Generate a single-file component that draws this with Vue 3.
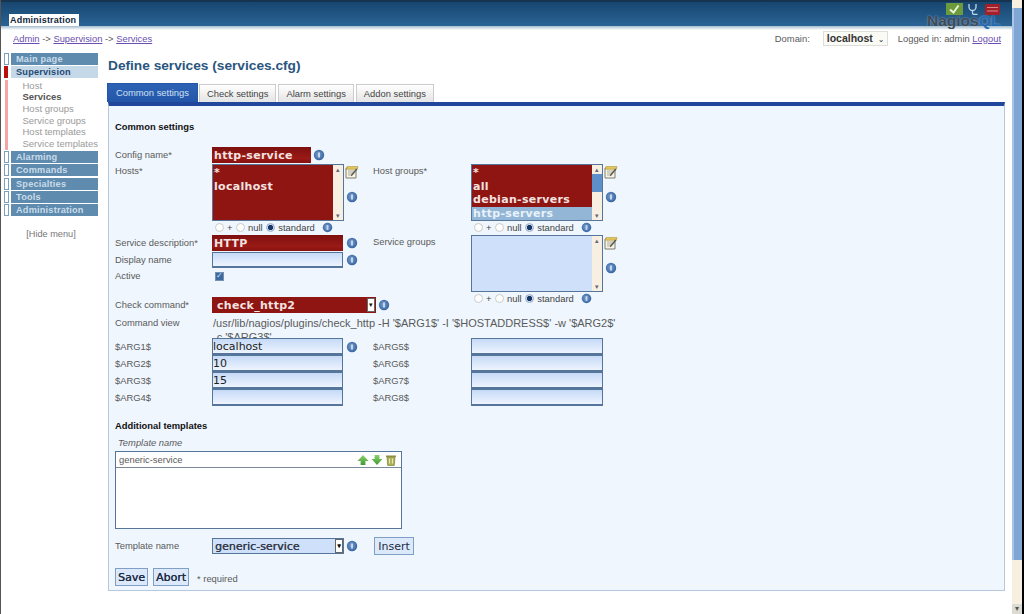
<template>
  <div class="page">
    <svg class="defs" width="0" height="0">
      <defs>
        <radialGradient id="helpFill" cx="45%" cy="45%" r="60%">
          <stop offset="0" stop-color="#7fa2cf" />
          <stop offset="1" stop-color="#2f5f9e" />
        </radialGradient>
        <linearGradient id="arrowFill" x1="0" y1="0" x2="0" y2="1">
          <stop offset="0" stop-color="#8fd06a" />
          <stop offset="1" stop-color="#3f9a35" />
        </linearGradient>
        <symbol id="help" viewBox="0 0 12 12">
          <circle cx="6" cy="6" r="5.2" fill="url(#helpFill)" />
          <path d="M5 3.400h2v5.200H5z" fill="#c5d6ec" />
        </symbol>
        <symbol id="note" viewBox="0 0 14 14">
          <path d="M1 3h10v10H1z" fill="#f8f4e4" stroke="#7d7d6c" />
          <path d="M3 6h6M3 8h6M3 10h4" stroke="#9a9a8a" stroke-width=".8" />
          <path d="M2 1.600h11l-.6 2.600H1.400z" fill="#e5c95e" stroke="#a98f35" stroke-width=".6" />
          <path d="M12.400 4.400 7.400 10.600l-1.500.6.3-1.600 5-6.200z" fill="#5b5b50" />
        </symbol>
      </defs>
    </svg>

    <div class="app">
      <header class="topbar">
        <div class="main-tab">Administration</div>
        <div class="logo">
          <div class="logo-icons">
            <svg width="17" height="12" viewBox="0 0 17 12">
              <rect width="17" height="12" fill="#6d9a3a" />
              <path d="M4 6.500 7.500 9.500l5-7" fill="none" stroke="#e8f3d8" stroke-width="2" />
            </svg>
            <svg width="13" height="12" viewBox="0 0 13 12">
              <path d="M3 1v3a3.500 3.500 0 0 0 7 0V1M6.500 7.500V10q0 1.500 2 1.500h3" fill="none" stroke="#bcd7ee" stroke-width="1.300" />
            </svg>
            <svg width="15" height="12" viewBox="0 0 15 12">
              <rect y="1" width="15" height="11" rx="1" fill="#a3202a" />
              <path d="M2 4.500h11M2 8h11" stroke="#d98a8a" stroke-width="1.200" />
            </svg>
          </div>
          <div class="logo-text">Nagios<span>QL</span></div>
        </div>
      </header>
      <div class="top-fade"></div>

      <div class="crumbs">
        <div class="path">
          <a>Admin</a> -&gt; <a>Supervision</a> -&gt; <a>Services</a>
        </div>
        <div class="session">
          <span>Domain:</span>
          <div class="domain">localhost <i>⌄</i></div>
          <span>Logged in: admin <a>Logout</a></span>
        </div>
      </div>

      <div class="layout">
        <aside class="side">
          <template v-for="m in menu" :key="m.name">
            <div class="menu-item" :class="{ open: m.items }">
              <span class="marker"></span>
              <span class="menu-label">{{ m.name }}</span>
            </div>
            <ul v-if="m.items" class="submenu">
              <li v-for="s in m.items" :key="s" :class="{ cur: s === 'Services' }">{{ s }}</li>
            </ul>
          </template>
          <div class="hide-menu">[Hide menu]</div>
        </aside>

        <main class="content">
          <h1>Define services (services.cfg)</h1>
          <nav class="tabs">
            <div v-for="(t, i) in tabs" :key="t" class="tab" :class="{ active: i === 0 }">{{ t }}</div>
          </nav>

          <section class="panel">
            <h2>Common settings</h2>

            <div class="columns">
              <div class="col-left">
                <div class="row r16">
                  <label>Config name*</label>
                  <input class="field red short" value="http-service" />
                  <svg class="help"><use href="#help" /></svg>
                </div>
                <div class="row list-row">
                  <label>Hosts*</label>
                  <div class="listbox red">
                    <div class="opts"><div>*</div><div>localhost</div></div>
                    <div class="scroll"><b>▴</b><b>▾</b></div>
                  </div>
                  <div class="list-icons">
                    <svg class="note"><use href="#note" /></svg>
                    <svg class="help"><use href="#help" /></svg>
                  </div>
                </div>
                <div class="row radios-row">
                  <label></label>
                  <div class="radios">
                    <input type="radio" />+ <input type="radio" />null <input type="radio" checked />standard
                    <svg class="help"><use href="#help" /></svg>
                  </div>
                </div>
                <div class="row r17">
                  <label>Service description*</label>
                  <input class="field red wide" value="HTTP" />
                  <svg class="help"><use href="#help" /></svg>
                </div>
                <div class="row r17">
                  <label>Display name</label>
                  <input class="field wide" />
                  <svg class="help"><use href="#help" /></svg>
                </div>
                <div class="row active-row">
                  <label>Active</label>
                  <input class="check" type="checkbox" checked />
                </div>
              </div>

              <div class="col-right">
                <div class="row list-row">
                  <label>Host groups*</label>
                  <div class="listbox red">
                    <div class="opts">
                      <div>*</div><div>all</div><div>debian-servers</div>
                      <div class="selected">http-servers</div>
                    </div>
                    <div class="scroll"><b>▴</b><em></em><b>▾</b></div>
                  </div>
                  <div class="list-icons">
                    <svg class="note"><use href="#note" /></svg>
                    <svg class="help"><use href="#help" /></svg>
                  </div>
                </div>
                <div class="row radios-row">
                  <label></label>
                  <div class="radios">
                    <input type="radio" />+ <input type="radio" />null <input type="radio" checked />standard
                    <svg class="help"><use href="#help" /></svg>
                  </div>
                </div>
                <div class="row list-row">
                  <label>Service groups</label>
                  <div class="listbox">
                    <div class="opts"></div>
                    <div class="scroll"><b>▴</b><b>▾</b></div>
                  </div>
                  <div class="list-icons">
                    <svg class="note"><use href="#note" /></svg>
                    <svg class="help"><use href="#help" /></svg>
                  </div>
                </div>
                <div class="row radios-row">
                  <label></label>
                  <div class="radios">
                    <input type="radio" />+ <input type="radio" />null <input type="radio" checked />standard
                    <svg class="help"><use href="#help" /></svg>
                  </div>
                </div>
              </div>
            </div>

            <div class="row command-row">
              <label>Check command*</label>
              <div class="select red cmd"><span>check_http2</span><i class="drop">▾</i></div>
              <svg class="help"><use href="#help" /></svg>
            </div>
            <div class="row view-row">
              <label>Command view</label>
              <div class="cmd-view">/usr/lib/nagios/plugins/check_http -H '$ARG1$' -I '$HOSTADDRESS$' -w '$ARG2$' -c '$ARG3$'</div>
            </div>

            <div class="args">
              <div v-for="a in args" :key="a.name" class="arg-row">
                <div class="row arg-left">
                  <label>{{ a.name }}</label>
                  <input class="field wide" :value="a.value" />
                  <svg v-if="a.help" class="help"><use href="#help" /></svg>
                </div>
                <div class="row arg-right">
                  <label>{{ a.other }}</label>
                  <input class="field wide" />
                </div>
              </div>
            </div>

            <h2 class="add-title">Additional templates</h2>
            <div class="tpl-head">Template name</div>
            <div class="tpl-box">
              <div class="tpl-line">
                <span>generic-service</span>
                <div class="tpl-icons">
                  <svg width="12" height="12" viewBox="0 0 12 12"><path d="M6 1 11.500 7H8.400v4H3.600V7H.5z" fill="url(#arrowFill)" /></svg>
                  <svg width="12" height="12" viewBox="0 0 12 12"><path d="M3.600 1h4.800v4h3.100L6 11 .5 5h3.100z" fill="url(#arrowFill)" /></svg>
                  <svg width="12" height="12" viewBox="0 0 12 12">
                    <path d="M2 3h8l-.7 8.400H2.700z" fill="#b0b35a" stroke="#7c7f3a" stroke-width=".7" />
                    <path d="M1 1.500h10V3H1z" fill="#8c8f45" />
                    <path d="M4.500 4.500v5M7.500 4.500v5" stroke="#e6e6b4" />
                  </svg>
                </div>
              </div>
            </div>

            <div class="row insert-row">
              <label>Template name</label>
              <div class="select tpl-select"><span>generic-service</span><i class="drop">▾</i></div>
              <svg class="help"><use href="#help" /></svg>
              <button class="btn insert">Insert</button>
            </div>

            <div class="actions">
              <button class="btn">Save</button>
              <button class="btn">Abort</button>
              <span>* required</span>
            </div>
          </section>
        </main>
      </div>
    </div>

    <div class="page-scroll">
      <span class="sb-btn"></span>
      <span class="sb-thumb"></span>
      <span class="sb-track"></span>
      <span class="sb-btn low">▾</span>
    </div>
  </div>
</template>

<script setup>
const menu = [
  { name: 'Main page' },
  { name: 'Supervision', items: ['Host', 'Services', 'Host groups', 'Service groups', 'Host templates', 'Service templates'] },
  { name: 'Alarming' },
  { name: 'Commands' },
  { name: 'Specialties' },
  { name: 'Tools' },
  { name: 'Administration' },
]

const tabs = ['Common settings', 'Check settings', 'Alarm settings', 'Addon settings']

const args = [
  { name: '$ARG1$', other: '$ARG5$', value: 'localhost', help: true },
  { name: '$ARG2$', other: '$ARG6$', value: '10' },
  { name: '$ARG3$', other: '$ARG7$', value: '15' },
  { name: '$ARG4$', other: '$ARG8$', value: '' },
]
</script>

<style>
html, body { margin: 0; background: #fff; overflow: hidden; }
</style>

<style scoped>
.page {
  width: 1024px; height: 614px; box-sizing: border-box;
  border-left: 1px solid #555;
  border-right: 2px solid #000;
  display: flex;
  font: 9.400px "Liberation Sans", Arial, sans-serif;
  color: #5a5a5a;
  overflow: hidden;
}
.defs { position: absolute; }
.app { width: 1011px; flex: none; }

/* browser scrollbar */
.page-scroll { flex: 1; display: flex; flex-direction: column; background: #f7efe0; }
.sb-btn { height: 8px; flex: none; background: #f7efe0; }
.sb-btn.low { height: 10px; background: #dcdcd4; font: 8px/9px "DejaVu Sans", sans-serif; color: #555; text-align: center; }
.sb-thumb { height: 552px; flex: none; background: #7fa6d4; border-left: 2px solid #a9c6e4; box-sizing: border-box; }
.sb-track { flex: 1; }

/* header */
.topbar {
  height: 26px;
  background: linear-gradient(#17466f, #2a6496);
  border-top: 2px solid #16344f;
  box-sizing: border-box;
  display: flex; align-items: flex-end; justify-content: space-between;
  padding-left: 8px;
}
.main-tab {
  height: 12px; line-height: 12px; padding: 0 3px 0 1px;
  background: #fff; color: #12283c;
  font-size: 9px; font-weight: bold; letter-spacing: .2px;
}
.logo { width: 86px; align-self: flex-start; position: relative; }
.logo-icons { display: flex; padding: 1px 0 0 20px; height: 12px; }
.logo-icons svg:nth-child(2) { margin: 0 6px 0 3px; }
.logo-text {
  margin: -2px 0 0 1px;
  font: bold 15.500px/15px "Liberation Sans", sans-serif; color: #3f4a54;
  text-shadow: 0 0 2px rgba(190, 210, 225, .7);
  white-space: nowrap;
}
.logo-text span { color: #2468b0; }
.top-fade { height: 4px; background: linear-gradient(#a4bccc, #fff); }

.crumbs {
  height: 18px; display: flex; justify-content: space-between; align-items: center;
  padding: 0 11px 0 12px; margin-top: -1px;
}
.crumbs a { color: #6a4fb0; text-decoration: underline; }
.session { display: flex; align-items: center; gap: 10px; }
.session span:first-child { margin-right: 3px; }
.domain {
  width: 65px; height: 15px; box-sizing: border-box; padding-left: 3px;
  border: 1px solid #ddd; background: #fbfbf6; color: #333;
  font: bold 10.500px/13px "Liberation Sans", sans-serif;
  white-space: nowrap;
}
.domain i { font: normal 8px "DejaVu Sans", sans-serif; margin-left: 2px; }

.layout { display: flex; }

/* left menu */
.side { width: 94px; margin-left: 3px; margin-right: 10px; padding-top: 6px; flex: none; }
.menu-item {
  height: 12px; margin-bottom: 1.400px; display: flex; gap: 2px;
  color: #c9dcea; font-size: 9.200px; font-weight: bold; line-height: 12px; letter-spacing: .2px;
}
.marker { width: 5px; height: 12px; background: #fff; border: 1px solid #7d9fbc; box-sizing: border-box; flex: none; }
.menu-label { flex: 1; background: #5f8bae; padding-left: 5px; }
.menu-item.open { color: #1f4a75; }
.menu-item.open .menu-label { background: #c5d8e8; }
.menu-item.open .marker { background: #b90f0f; border-color: #b90f0f; width: 4px; margin-right: 1px; }
.submenu {
  list-style: none; margin: 0 0 1px 1px; padding: 0 0 0 14.500px; height: 70px;
  border-left: 3px solid #f2a6a6;
  line-height: 11.600px; color: #9a9a9a; font-size: 9.500px; white-space: nowrap;
}
.submenu li.cur { color: #555; font-weight: bold; }
.hide-menu { margin-top: 13px; text-align: center; color: #777; font-size: 9.200px; }

/* content */
.content { width: 897px; flex: none; }
h1 { margin: 10px 0 0; height: 26px; font-size: 13.700px; line-height: 18px; color: #2a5580; }
.tabs { display: flex; gap: 2px; height: 19px; align-items: flex-end; }
.tab {
  height: 18px; line-height: 18px; padding: 0 7px;
  background: linear-gradient(#fff, #e4e4e4); border: 1px solid #ccc; border-bottom: 0;
  box-sizing: border-box; color: #444; font-size: 9.400px;
}
.tab.active {
  height: 19px; padding: 0 8px; margin: 0 -1px 0 -1px;
  background: linear-gradient(#2c62b4, #2456a8); border-color: #2456a8; color: #cfe0f5;
}
.panel {
  border-top: 4px solid #21479c;
  border-left: 1px solid #b4c8de; border-right: 1px solid #b4c8de; border-bottom: 1px solid #b4c8de;
  background: #eff6fe; height: 489px; box-sizing: border-box;
  padding: 15px 0 0 6px;
}
h2 { margin: 0; height: 26px; font-size: 9.400px; line-height: 12px; color: #111; }

.columns { display: flex; height: 150px; }
.col-left { width: 258px; flex: none; }
.col-right { padding-top: 16px; }
.row { display: flex; align-items: center; }
.row label { width: 97px; flex: none; white-space: nowrap; line-height: 16px; }
.col-right .row label, .arg-right label { width: 98px; }
.r16 { height: 16px; }
.r17 { height: 16px; margin-top: 1px; }
.list-row { height: 57px; margin-top: 1px; align-items: flex-start; }
.list-row label { line-height: 13px; }
.radios-row { height: 13px; }
.active-row { height: 14px; margin-top: 1px; }

.field {
  height: 16px; box-sizing: border-box; padding: 0; margin: 0;
  border: 1px solid #55759b; border-bottom-width: 2px;
  background: linear-gradient(#c6daf6, #edf4ff);
  font: 11px "DejaVu Sans", sans-serif; color: #222; outline: none;
}
.wide { width: 131px; }
.arg-right .wide { width: 132px; }
.short { width: 99px; }
.field.red, .listbox.red .opts, .select.red {
  background: #8f1512; color: #f3e3e0; font-weight: bold; letter-spacing: .3px;
}
.field.red { border: 0; padding-left: 2px; background: linear-gradient(#7d1010, #9a1a16 70%, #86110f); }
.help { width: 12px; height: 12px; margin-left: 2px; flex: none; }
.r17 .help, .arg-left .help { margin-left: 3px; }

.listbox {
  width: 132px; height: 57px; box-sizing: border-box; display: flex;
  border: 1px solid #55759b; background: #cfe0fa;
}
.opts {
  flex: 1; overflow: hidden;
  font: bold 11px/13.500px "DejaVu Sans", sans-serif; letter-spacing: .3px;
}
.listbox.red .opts { padding-top: 1px; }
.opts > div { padding-left: 1px; height: 13.500px; }
.opts .selected { background: #93b6d6; color: #e8f2fa; }
.scroll {
  width: 10px; background: #f7f0e2; display: flex; flex-direction: column; justify-content: space-between;
  font-size: 7px; line-height: 9px; text-align: center; color: #667;
}
.scroll b { font-weight: normal; height: 9px; flex: none; }
.scroll em { flex: none; height: 18px; margin-bottom: auto; background: #5d8fc8; }
.list-icons { width: 14px; margin-left: 1px; display: flex; flex-direction: column; align-items: center; gap: 12px; padding-top: 1px; }
.list-icons .help { margin-left: 0; }
.note { width: 14px; height: 14px; }

.radios { display: flex; align-items: center; font-size: 9.400px; color: #444; padding-left: 2px; white-space: pre; }
.radios .help { margin-left: 5px; width: 11px; height: 11px; }
.radios input { appearance: none; margin: 0 3px 0 1px; }
.radios input {
  width: 9px; height: 9px; border: 1px solid #c8ccc8; border-radius: 50%; background: #fff; box-sizing: border-box;
}
.radios input:checked { background: radial-gradient(#17386a 45%, #cdd8e8 60%); border-color: #9fb0c8; }
.check {
  appearance: none; width: 9px; height: 9px; background: #3a6aa0; border: 1px solid #7390b5; box-sizing: border-box;
  margin: 0 0 0 3px; position: relative;
}
.check::before {
  content: "✓"; position: absolute; left: 0; top: -2px;
  font: bold 8px/10px "DejaVu Sans", sans-serif; color: #dbe6f2;
}

.command-row { height: 16px; }
.select {
  height: 16px; box-sizing: border-box; display: flex; align-items: center; justify-content: space-between;
  font: 11px "DejaVu Sans", sans-serif;
}
.cmd { width: 164px; padding-left: 5px; padding-right: 1px; }
.tpl-select {
  width: 132px; background: #cfe0fa; color: #333a4a; border: 1px solid #55759b; padding-left: 2px;
  text-shadow: .3px 0 0 currentColor;
}
.drop {
  width: 8px; height: 14px; background: #fff; border: 1px solid #666; box-sizing: border-box;
  font: normal 7px/12px "DejaVu Sans", sans-serif; color: #111; text-align: center; flex: none;
}
.view-row { height: 22px; align-items: flex-start; margin-top: 3px; }
.view-row label { line-height: 14px; }
.cmd-view {
  width: 408px; height: 22px; overflow: hidden; padding-left: 1px;
  font-size: 11px; line-height: 14px; color: #5a5a5a;
}
.arg-row { display: flex; height: 17px; }
.arg-left { width: 258px; flex: none; }
.arg-row .field { height: 17px; }
.add-title { margin-top: 14px; height: 17px; }
.tpl-head { height: 14px; padding-left: 3px; font-style: italic; line-height: 12px; }
.tpl-box { width: 287px; height: 78px; box-sizing: border-box; border: 1px solid #55759b; background: #fff; }
.tpl-line {
  height: 15px; display: flex; align-items: center; justify-content: space-between;
  border-bottom: 1px solid #7a8a9a; padding: 0 4px 0 3px;
}
.tpl-icons { display: flex; gap: 2px; }

.insert-row { height: 18px; margin-top: 8px; }
.btn {
  height: 18px; padding: 0; box-sizing: border-box;
  border: 1px solid #7fa0c4; background: #dce9fa;
  font: 11px "DejaVu Sans", sans-serif; color: #1c2c44;
  text-shadow: .3px 0 0 currentColor;
}
.insert { margin-left: 16px; width: 40px; text-shadow: none; }
.actions { display: flex; align-items: center; gap: 5px; margin-top: 13px; height: 18px; }
.actions .btn { width: 33px; }
.actions .btn + .btn { width: 36px; }
.actions span { margin: 2px 0 0 3px; }
</style>
